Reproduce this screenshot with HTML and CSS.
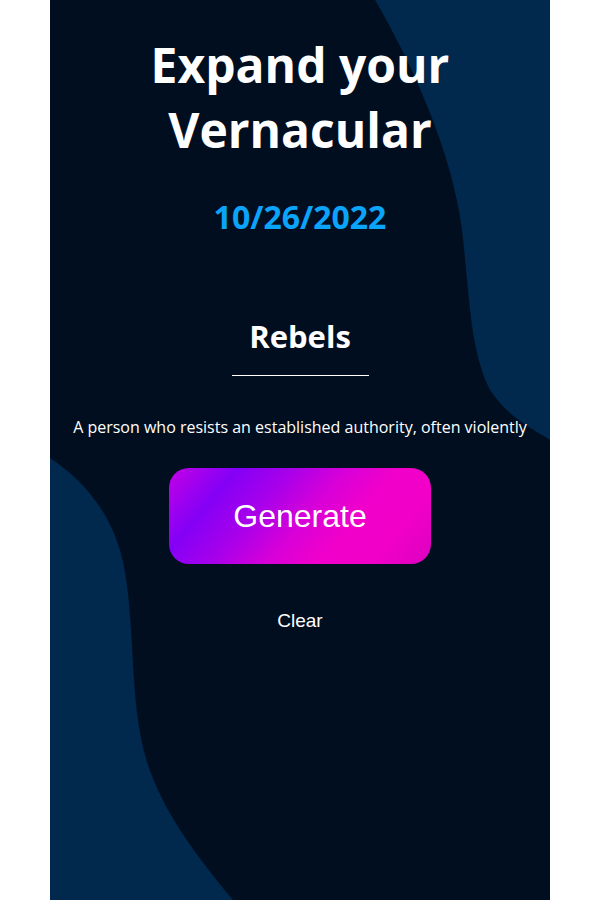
FILE: index.html
```html
<!DOCTYPE html>
<html lang="en">
<head>
<meta charset="utf-8">
<title>Expand your Vernacular</title>
<link rel="stylesheet" href="styles.css">
</head>
<body>
<main class="app">
  <svg class="blobs" viewBox="0 0 500 900" preserveAspectRatio="none" aria-hidden="true">
    <path d="M325 0 C 360 60, 402 150, 412 230 C 420 300, 420 350, 440 390 C 460 420, 485 430, 500 440 L500 0 Z" />
    <path d="M0 458 C 30 478, 65 512, 75 572 C 85 632, 80 700, 95 755 C 110 810, 150 860, 183 900 L0 900 Z" />
  </svg>
  <div class="content">
    <h1 class="title">Expand your Vernacular</h1>
    <p class="date">10/26/2022</p>
    <h2 class="word">Rebels</h2>
    <div class="rule"></div>
    <p class="definition">A person who resists an established authority, often violently</p>
    <button class="generate" type="button">Generate</button>
    <button class="clear" type="button">Clear</button>
  </div>
</main>
</body>
</html>
```

FILE: styles.css
```css
html, body {
  margin: 0;
  padding: 0;
  background: #ffffff;
}

.app {
  position: relative;
  width: 500px;
  min-height: 900px;
  margin: 0 auto;
  background: #010e1f;
  overflow: hidden;
  font-family: "Open Sans", "Noto Sans", sans-serif;
  color: #ffffff;
}

.blobs {
  position: absolute;
  left: 0;
  top: 0;
  width: 500px;
  height: 900px;
  fill: #01284d;
}

.content {
  position: relative;
  display: flex;
  flex-direction: column;
  align-items: center;
  text-align: center;
  padding: 32px 20px 0;
}

.title {
  margin: 0;
  font-size: 48px;
  line-height: 65px;
  font-weight: 700;
  max-width: 380px;
}

.date {
  margin: 33px 0 0;
  font-size: 32px;
  line-height: 44px;
  font-weight: 700;
  color: #0aa4fb;
}

.word {
  margin: 76px 0 0;
  font-size: 31px;
  line-height: 42px;
  font-weight: 700;
}

.rule {
  width: 137px;
  height: 1px;
  margin-top: 18px;
  background: #ffffff;
}

.definition {
  margin: 40px 0 0;
  font-size: 16px;
  line-height: 22px;
}

.generate {
  margin-top: 30px;
  width: 262px;
  height: 96px;
  border: none;
  border-radius: 20px;
  background: linear-gradient(130deg, #c400e6 0%, #8400f6 20%, #a800ea 36%, #d800d8 52%, #f000ca 66%, #f200c8 82%, #dc00c0 100%);
  color: #ffffff;
  font-family: "Liberation Sans", Arial, sans-serif;
  font-size: 32px;
  padding: 0;
  cursor: pointer;
}

.clear {
  margin-top: 46px;
  border: none;
  background: none;
  padding: 0;
  color: #ffffff;
  font-family: "Liberation Sans", Arial, sans-serif;
  font-size: 19px;
  line-height: 22px;
  cursor: pointer;
}
```
